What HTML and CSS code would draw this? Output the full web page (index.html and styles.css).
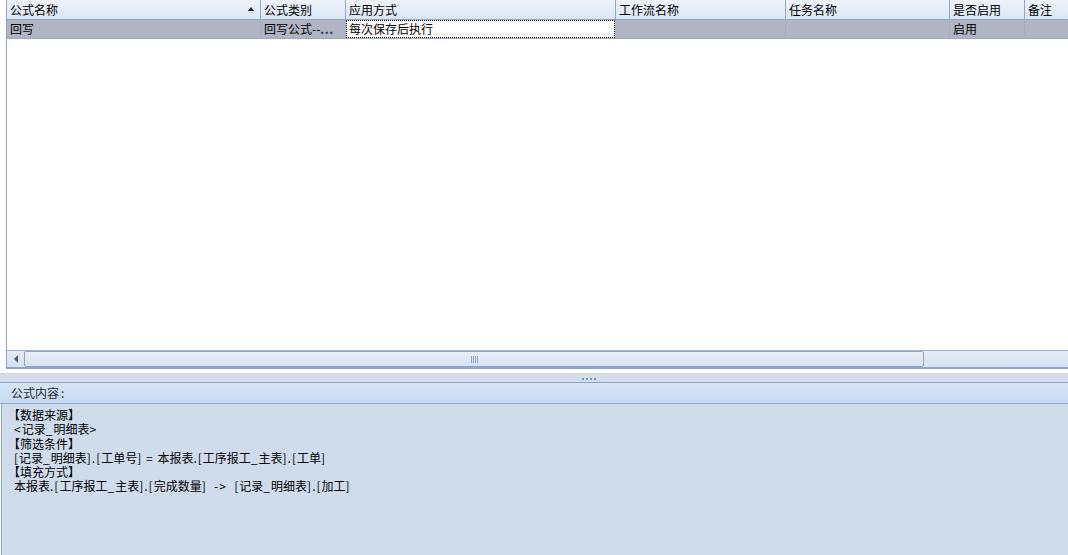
FILE: index.html
```html
<!DOCTYPE html>
<html lang="zh">
<head>
<meta charset="utf-8">
<link rel="stylesheet" href="styles.css">
</head>
<body>
<div class="page">
  <div class="top">
    <div class="grid">
      <div class="hdr">
        <div class="c c1">公式名称<span class="sort"></span></div>
        <div class="c c2">公式类别</div>
        <div class="c c3">应用方式</div>
        <div class="c c4">工作流名称</div>
        <div class="c c5">任务名称</div>
        <div class="c c6">是否启用</div>
        <div class="c c7">备注</div>
      </div>
      <div class="row">
        <div class="c c1">回写</div>
        <div class="c c2">回写公式--<span class="ell">...</span></div>
        <div class="c c3 focus">每次保存后执行</div>
        <div class="c c4"></div>
        <div class="c c5"></div>
        <div class="c c6">启用</div>
        <div class="c c7"></div>
      </div>
      <div class="body"></div>
      <div class="hscroll">
        <div class="arrow"><span class="tri"></span></div>
        <div class="thumb"><span class="grip"></span></div>
        <div class="rest"></div>
      </div>
    </div>
  </div>
  <div class="gap"></div>
  <div class="splitter"><span class="dots"></span></div>
  <div class="panel-hdr">公式内容<span class="colon">:</span></div>
  <div class="panel-body">
    <div class="ln">【数据来源】</div>
    <div class="ln ind"><span class="a">&lt;</span>记录<span class="a">_</span>明细表<span class="a">&gt;</span></div>
    <div class="ln">【筛选条件】</div>
    <div class="ln ind"><span class="a">[</span>记录<span class="a">_</span>明细表<span class="a">].[</span>工单号<span class="a">] = </span>本报表<span class="a">.[</span>工序报工<span class="a">_</span>主表<span class="a">].[</span>工单<span class="a">]</span></div>
    <div class="ln">【填充方式】</div>
    <div class="ln ind">本报表<span class="a">.[</span>工序报工<span class="a">_</span>主表<span class="a">].[</span>完成数量<span class="a">]&nbsp; -&gt;&nbsp; [</span>记录<span class="a">_</span>明细表<span class="a">].[</span>加工<span class="a">]</span></div>
  </div>
</div>
</body>
</html>
```

FILE: styles.css
```css
html, body {
  margin: 0;
  padding: 0;
  background: #ffffff;
}
body {
  font-family: "Noto Sans CJK SC", "Liberation Sans", sans-serif;
  font-size: 12px;
  color: #000;
  width: 1068px;
  height: 555px;
  overflow: hidden;
}
.page {
  display: flex;
  flex-direction: column;
  height: 555px;
}
.top {
  padding-left: 6px;
  height: 369px;
  box-sizing: border-box;
  overflow: hidden;
}
.grid {
  height: 369px;
  box-sizing: border-box;
  border-left: 1px solid #8ea6c8;
  border-bottom: 1px solid #8ea6c8;
  display: flex;
  flex-direction: column;
  width: 1200px;
}
.hdr, .row {
  display: flex;
}
.hdr {
  height: 20px;
  background: linear-gradient(#eef3fa, #dbe6f4);
  border-bottom: 1px solid #8ea6c8;
  box-sizing: border-box;
}
.row {
  height: 19px;
  background: #b1b4c2;
  border-bottom: 1px solid #9aa6c4;
  box-sizing: border-box;
}
.c {
  box-sizing: border-box;
  border-right: 1px solid #8ea6c8;
  padding-left: 3px;
  line-height: 18px;
  white-space: nowrap;
  overflow: hidden;
  position: relative;
}
.row .c {
  border-right-color: #a2abc8;
}
.hdr .c { line-height: 19px; }
.c1 { width: 254px; }
.c2 { width: 85px; }
.c3 { width: 270px; }
.c4 { width: 170px; }
.c5 { width: 164px; }
.c6 { width: 75px; }
.c7 { width: 120px; }
.ell {
  font-weight: bold;
  color: #1c2c5c;
  letter-spacing: 0.5px;
}
.row .focus {
  background: #ffffff;
  border: 1px dotted #000;
  padding-left: 2px;
  line-height: 16px;
  margin-right: 1px;
  width: 269px;
}
.sort {
  position: absolute;
  left: 241px;
  top: 7px;
  width: 0;
  height: 0;
  border-left: 3px solid transparent;
  border-right: 3px solid transparent;
  border-bottom: 4px solid #222;
}
.body {
  flex: 1;
  background: #fff;
}
.hscroll {
  height: 16px;
  display: flex;
  border-top: 1px solid #9cb2d2;
  border-bottom: 1px solid #8ea6c8;
  background: linear-gradient(#e3ebf6, #d6e2f1);
  margin-bottom: 0;
  box-sizing: content-box;
}
.arrow {
  width: 17px;
  display: flex;
  align-items: center;
  justify-content: center;
}
.tri {
  width: 0;
  height: 0;
  border-top: 4px solid transparent;
  border-bottom: 4px solid transparent;
  border-right: 4px solid #4a5a78;
}
.thumb {
  width: 900px;
  box-sizing: border-box;
  border: 1px solid #8ea6c8;
  border-radius: 2px;
  background: linear-gradient(#e9eff8, #d7e2f1);
  display: flex;
  align-items: center;
  justify-content: center;
}
.grip {
  width: 7px;
  height: 7px;
  background: repeating-linear-gradient(90deg, #8ea6c8 0 1px, transparent 1px 2px);
}
.rest { flex: 1; }
.gap {
  height: 4px;
  background: #fff;
  border-bottom: 2px solid #d9d9d9;
}
.splitter {
  height: 7px;
  background: #d3deee;
  border-bottom: 1px solid #8ea6c8;
  position: relative;
}
.dots {
  position: absolute;
  left: 582px;
  top: 3px;
  width: 14px;
  height: 2px;
  background: repeating-linear-gradient(90deg, #7c93b8 0 2px, transparent 2px 4px);
}
.panel-hdr {
  height: 20px;
  line-height: 19px;
  padding-left: 11px;
  background: linear-gradient(#d6e3f4, #c9dbf1);
  border-bottom: 1px solid #8ea6c8;
  box-sizing: content-box;
  color: #1e2a3c;
}
.colon {
  margin-left: 2px;
}
.panel-body {
  flex: 1;
  background: #cfdcec;
  border-left: 1px solid #8ea6c8;
  margin-left: 1px;
  padding: 4px 0 0 6px;
}
.ln {
  line-height: 14.3px;
  height: 14.3px;
  white-space: pre;
}
.ind {
  padding-left: 6px;
}
.a {
  letter-spacing: 1px;
}
```
